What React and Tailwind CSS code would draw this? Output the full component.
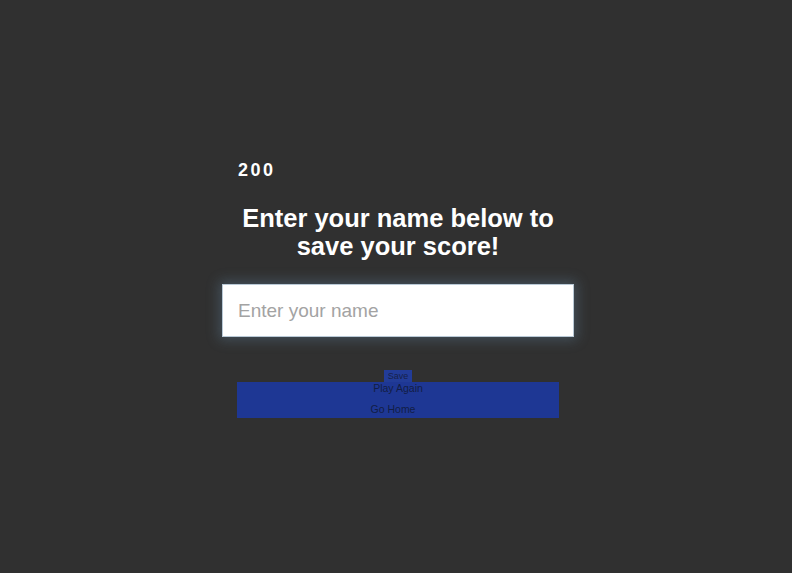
import { useState } from 'react';

export default function App() {
  const [name, setName] = useState('');

  return (
    <div className="min-h-screen bg-[#303030] font-['Liberation_Sans',Arial,sans-serif]">
      <div className="flex justify-center pl-1 pt-[160px]">
        <div className="flex w-[352px] flex-col">
          <p className="pl-4 text-[18px] font-bold leading-[20px] tracking-[2.5px] text-white">200</p>

          <h1 className="mt-6 text-center text-[25.5px] font-bold leading-[28px] text-white">
            Enter your name below to
            <br />
            save your score!
          </h1>

          <input
            type="text"
            value={name}
            onChange={(e) => setName(e.target.value)}
            placeholder="Enter your name"
            className="mt-6 h-[53px] w-full border border-[#b9c9d6] bg-white px-[15px] text-[19px] text-[#333] shadow-[0_0_12px_3px_rgba(110,150,180,0.32)] outline-none placeholder:text-[#a3a3a3]"
          />

          <button className="mt-[33px] h-[12px] w-[28px] self-center bg-[#223c98] text-[9px] leading-[12px] text-[#16214a]">
            Save
          </button>

          <div className="mx-[15px] flex h-[36px] flex-col items-center bg-[#1e3794] text-[10.5px] leading-[12px] text-[#121d45]">
            <button className="mt-0">Play Again</button>
            <button className="mr-[10px] mt-[9px]">Go Home</button>
          </div>
        </div>
      </div>
    </div>
  );
}
